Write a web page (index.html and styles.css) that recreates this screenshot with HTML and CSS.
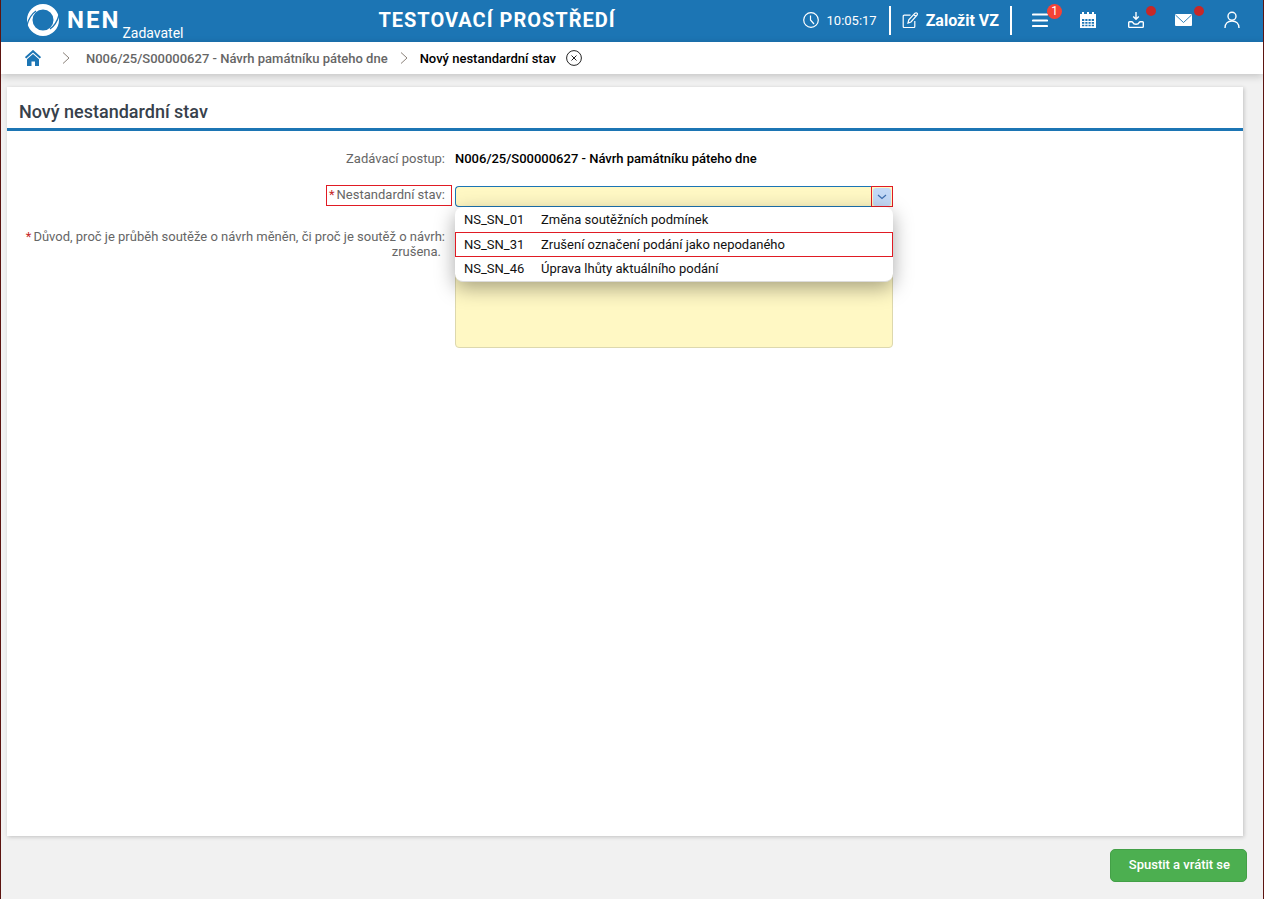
FILE: index.html
```html
<!DOCTYPE html>
<html lang="cs">
<head>
<meta charset="utf-8">
<meta name="viewport" content="width=device-width, initial-scale=1">
<title>NEN – Nový nestandardní stav</title>
<link rel="stylesheet" href="styles.css">
</head>
<body class="page">
<header class="topbar">
  <div class="brand">
    <svg class="brand-mark" width="34" height="34" viewBox="0 0 34 34" aria-hidden="true">
      <path fill="#fff" fill-rule="evenodd" d="M17 1a16 16 0 1 1 0 32a16 16 0 1 1 0-32zM17 6.500a10.500 10.500 0 1 0 0 21a10.500 10.500 0 1 0 0-21z"/>
      <path d="M10 8Q3.500 12.500 1 22M24 26Q30.500 21.500 33 12" fill="none" stroke="#1c75b4" stroke-width="1.300"/>
    </svg>
    <span class="brand-name">NEN</span>
    <span class="brand-role">Zadavatel</span>
  </div>
  <div class="environment">TESTOVACÍ PROSTŘEDÍ</div>
  <div class="clock">
    <svg width="16" height="16" viewBox="0 0 16 16" fill="none" stroke="#fff" stroke-width="1.200" aria-hidden="true"><circle cx="8" cy="8" r="7.300"/><path d="M7.500 3.500V8l3.500 4"/></svg>
    <span>10:05:17</span>
  </div>
  <button class="create" type="button">
    <svg width="16" height="16" viewBox="0 0 16 16" fill="none" stroke="#fff" stroke-width="1.200" aria-hidden="true"><path d="M8.500 3.200H2.200q-1 0-1 1v10.300q0 1 1 1h9.600q1 0 1-1V9"/><path d="M6 11l.8-3.200L13 1.200q1.200-.8 2 0t0 2L9 10zM11.800 2.500l2 2"/></svg>
    <span>Založit VZ</span>
  </button>
  <nav class="tools" aria-label="Nástroje">
    <button class="tool" type="button" aria-label="Menu">
      <svg width="16" height="16" viewBox="0 0 16 16" aria-hidden="true"><path d="M1 2.500h14M1 8.500h14M1 14h14" stroke="#fff" stroke-width="2.200" stroke-linecap="round"/></svg>
      <span class="badge">1</span>
    </button>
    <button class="tool" type="button" aria-label="Kalendář">
      <svg width="18" height="18" viewBox="0 0 18 18" aria-hidden="true"><path fill="#fff" d="M1 3h2V1h2v2h3V1h2v2h3V1h2v2h2v3H1zM1 6h16v11H1z"/><path fill="#1c75b4" d="M3 8h2.300v2H3zm3.300 0h2.200v2H6.300zm3.200 0h2.200v2H9.500zm3.200 0H15v2h-2.300zM3 11h2.300v1.700H3zm3.300 0h2.200v1.700H6.300zm3.200 0h2.200v1.700H9.500zm3.200 0H15v1.700h-2.300zM3 13.700h2.300v1.600H3zm3.300 0h2.200v1.600H6.300zm3.200 0h2.200v1.600H9.500zm3.200 0H15v1.600h-2.300z"/></svg>
    </button>
    <button class="tool" type="button" aria-label="Stažené soubory">
      <svg width="16" height="18" viewBox="0 0 16 18" fill="none" stroke="#fff" aria-hidden="true"><path stroke-width="1.400" d="M8 1v7M5.200 5.500L8 8.300l2.800-2.800"/><path stroke-width="1.400" d="M1.500 10.800h2.300q1 0 1.200 1 .4 1.400 3 1.400t3-1.400q.2-1 1.200-1h2.300q.8 0 .8.800v4q0 .8-.8.800h-13q-.8 0-.8-.8v-4q0-.8.800-.8z"/></svg>
      <span class="dot"></span>
    </button>
    <button class="tool" type="button" aria-label="Zprávy">
      <svg width="18" height="14" viewBox="0 0 18 14" aria-hidden="true"><rect y="1" width="17" height="12" rx="1" fill="#fff"/><path d="M.5 2l8 7.500 8-7.500" fill="none" stroke="#1c75b4" stroke-width=".9"/></svg>
      <span class="dot"></span>
    </button>
    <button class="tool" type="button" aria-label="Uživatel">
      <svg width="16" height="18" viewBox="0 0 16 18" fill="none" stroke="#fff" stroke-width="1.400" aria-hidden="true"><circle cx="8" cy="5.200" r="4"/><path d="M1 17c0-4.500 3-7 7-7s7 2.500 7 7"/></svg>
    </button>
  </nav>
</header>

<nav class="crumbs" aria-label="Drobečková navigace">
  <a class="home" href="#" aria-label="Domů">
    <svg width="16" height="16" viewBox="0 0 16 16" aria-hidden="true"><path d="M.6 7.800L8 1.200l7.400 6.600" fill="none" stroke="#1c75b4" stroke-width="2"/><path d="M2 9.300L8 4l6 5.300V16h-4v-4.500H6.500V16H2z" fill="#1c75b4"/></svg>
  </a>
  <svg class="sep" width="8" height="12" viewBox="0 0 8 12" aria-hidden="true"><path d="M1 .5L7 6l-6 5.500"/></svg>
  <a class="crumb" href="#">N006/25/S00000627 - Návrh památníku páteho dne</a>
  <svg class="sep" width="8" height="12" viewBox="0 0 8 12" aria-hidden="true"><path d="M1 .5L7 6l-6 5.500"/></svg>
  <span class="crumb current" aria-current="page">Nový nestandardní stav</span>
  <button class="close" type="button" aria-label="Zavřít">
    <svg width="16" height="16" viewBox="0 0 16 16" fill="none" stroke="#222" aria-hidden="true"><circle cx="8" cy="8" r="7.400"/><path d="M5.500 5.500l5 5M10.500 5.500l-5 5"/></svg>
  </button>
</nav>

<main class="card">
  <h1 class="title">Nový nestandardní stav</h1>
  <form class="form" id="state-form">
    <div class="row">
      <span class="label">Zadávací postup:</span>
      <span class="value">N006/25/S00000627 - Návrh památníku páteho dne</span>
    </div>
    <div class="row row-state">
      <label class="label marked" for="state"><span class="required">*</span>Nestandardní stav:</label>
      <div class="combo">
        <input class="combo-input" id="state" type="text" role="combobox" aria-expanded="true" aria-controls="state-list" autocomplete="off">
        <button class="combo-toggle" type="button" aria-label="Rozbalit seznam">
          <svg width="18" height="18" viewBox="0 0 18 18" aria-hidden="true"><rect width="18" height="18" rx="3" fill="#c3d9f6"/><path d="M5 7l4 3.500L13 7" fill="none" stroke="#3c6eaf" stroke-width="1.200"/></svg>
        </button>
        <ul class="options" id="state-list" role="listbox">
          <li class="option" role="option"><span>NS_SN_01</span><span>Změna soutěžních podmínek</span></li>
          <li class="option option-marked" role="option"><span>NS_SN_31</span><span>Zrušení označení podání jako nepodaného</span></li>
          <li class="option" role="option"><span>NS_SN_46</span><span>Úprava lhůty aktuálního podání</span></li>
        </ul>
      </div>
    </div>
    <div class="row row-reason">
      <label class="label" for="reason"><span class="required">*</span>Důvod, proč je průběh soutěže o návrh měněn, či proč je soutěž o návrh:<br><span class="label-end">zrušena.</span></label>
      <textarea class="reason" id="reason"></textarea>
    </div>
  </form>
</main>

<footer class="actions">
  <button class="submit" type="submit" form="state-form">Spustit a vrátit se</button>
</footer>
</body>
</html>
```

FILE: styles.css
```css
* {
  box-sizing: border-box;
}

.page {
  display: flex;
  flex-direction: column;
  min-height: 100vh;
  margin: 0;
  border: solid #5c1410;
  border-width: 0 1px;
  background: #f1f1f1;
  color: #111;
  font: 13px/15px Roboto, "Noto Sans", sans-serif;
}

button {
  padding: 0;
  border: 0;
  background: none;
  color: inherit;
  font: inherit;
  cursor: pointer;
}

svg {
  display: block;
  flex: none;
}

/* Top bar */
.topbar {
  display: flex;
  align-items: center;
  height: 42px;
  padding: 0 7px 2px 25px;
  background: #1c75b4;
  color: #fff;
}

.brand {
  display: flex;
  align-items: center;
  align-self: stretch;
}

.brand-name {
  margin-left: 7px;
  font-size: 24px;
  font-weight: 700;
  line-height: 28px;
  letter-spacing: 2px;
}

.brand-role {
  align-self: flex-end;
  margin-left: 2px;
  font-size: 14px;
  line-height: 14px;
}

.environment {
  flex: 1;
  padding-left: 8px;
  font-size: 20px;
  font-weight: 700;
  line-height: 24px;
  letter-spacing: 1px;
  text-align: center;
}

.clock {
  display: flex;
  align-items: center;
  gap: 8px;
  padding-right: 12px;
}

.create {
  display: flex;
  align-items: center;
  gap: 8px;
  height: 29px;
  padding: 0 11px;
  border: solid #fff;
  border-width: 0 2px;
  font-size: 16px;
  font-weight: 700;
  white-space: nowrap;
}

.tools {
  display: flex;
  margin-left: 4px;
}

.tool {
  position: relative;
  display: flex;
  align-items: center;
  justify-content: center;
  width: 48px;
  height: 40px;
}

.badge {
  position: absolute;
  top: 4px;
  right: 2px;
  width: 15px;
  height: 15px;
  border-radius: 50%;
  background: #f44336;
  font-size: 12px;
}

.dot {
  position: absolute;
  top: 6px;
  right: 4px;
  width: 10px;
  height: 10px;
  border-radius: 50%;
  background: #c62828;
}

/* Breadcrumbs */
.crumbs {
  display: flex;
  align-items: center;
  height: 32px;
  padding: 0 24px;
  background: #fff;
  box-shadow: 0 2px 8px rgba(0, 0, 0, 0.2);
}

.sep {
  margin: 0 12px;
  fill: none;
  stroke: #8a8078;
}

.home + .sep {
  margin: 0 16px 0 21px;
}

.crumb {
  color: #666;
  font-weight: 500;
  text-decoration: none;
}

.current {
  color: #000;
}

.close {
  margin-left: 10px;
}

/* Form card */
.card {
  flex: 1;
  margin: 13px 20px 0 6px;
  background: #fff;
  box-shadow: 1px 1px 4px rgba(0, 0, 0, 0.2);
}

.title {
  margin: 0;
  padding: 13px 12px 4px;
  border-bottom: 3px solid #1c75b4;
  color: #37414b;
  font-size: 18px;
  font-weight: 500;
  line-height: 24px;
}

.form {
  padding-top: 19px;
}

.row {
  display: grid;
  grid-template-columns: 448fr 438fr 350fr;
  align-items: start;
}

.row-state {
  margin-top: 18px;
}

.row-reason {
  margin-top: 21px;
}

.label {
  justify-self: end;
  margin-right: 3px;
  padding: 0 6px 0 2px;
  border: 1px solid transparent;
  color: #666;
  text-align: right;
}

.label-end {
  margin-right: 4px;
}

.marked {
  padding-top: 1px;
  padding-bottom: 3px;
  border-color: #e01b24;
}

.required {
  margin-right: 2px;
  color: #c62828;
}

.value {
  padding-top: 1px;
  color: #000;
  font-weight: 500;
}

.combo {
  position: relative;
  display: flex;
  margin-top: 1px;
}

.combo-input {
  flex: 1;
  min-width: 0;
  height: 21px;
  padding: 0 6px;
  border: 1px solid #1c75b4;
  border-right: 0;
  border-radius: 4px 0 0 4px;
  outline: 0;
  background: #fff8c4;
  font: inherit;
}

.combo-toggle {
  display: flex;
  align-items: center;
  justify-content: center;
  width: 22px;
  height: 21px;
  border: 1px solid #e01b24;
  background: #fff8c4;
}

.options {
  position: absolute;
  z-index: 1;
  top: 100%;
  left: 0;
  right: 0;
  margin: 0;
  padding: 1px 0 0;
  border-bottom: 1px solid #dcdcdc;
  border-radius: 8px;
  background: #fff;
  box-shadow: 0 6px 20px rgba(0, 0, 0, 0.35);
  list-style: none;
}

.option {
  display: grid;
  grid-template-columns: 77px 1fr;
  padding: 4px 8px;
  border: 1px solid transparent;
  line-height: 14px;
}

.option-marked {
  border-color: #e01b24;
  line-height: 15px;
}

.reason {
  height: 120px;
  padding: 4px 6px;
  border: 1px solid #ddd8ae;
  border-radius: 4px;
  outline: 0;
  background: #fff8c4;
  font: inherit;
  resize: none;
}

/* Footer */
.actions {
  display: flex;
  justify-content: flex-end;
  padding: 13px 16px 17px;
}

.submit {
  height: 33px;
  padding: 0 16px 2px 18px;
  border: 1px solid #43a047;
  border-radius: 5px;
  background: #4caf50;
  color: #fff;
  font-weight: 500;
}
```
